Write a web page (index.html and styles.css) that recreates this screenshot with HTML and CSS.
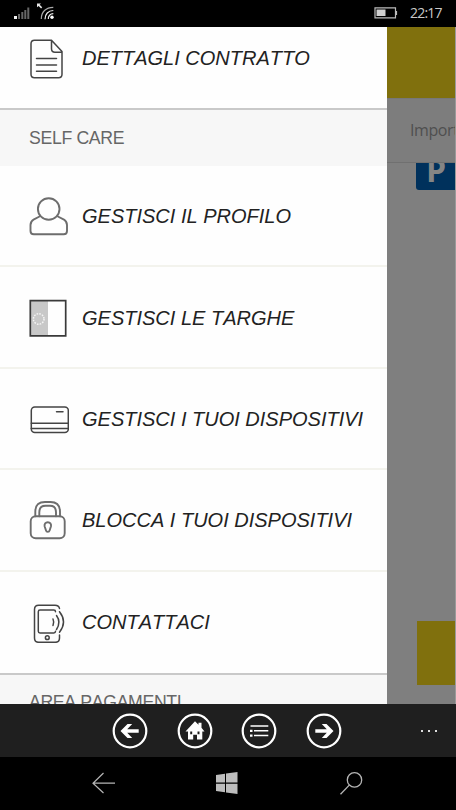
FILE: index.html
```html
<!DOCTYPE html>
<html lang="it">
<head>
<meta charset="utf-8">
<title>Menu</title>
<link rel="stylesheet" href="styles.css">
</head>
<body>
<div class="phone">
  <header class="status">
    <svg class="signal" width="42" height="20" viewBox="0 0 42 20">
      <path fill="#f2f2f2" d="M0 13h3v3H0z"/>
      <path fill="#666" d="M4 11h2v5H4zM7.300 9h2v7h-2zM10.300 7h2v9h-2zM13.300 4.500h2v11.500h-2z"/>
      <path fill="#e8e8e8" d="M23 .5h4l-1.300 1.300 2.500 2.500-1.100 1.100-2.500-2.500L23 4.300z"/>
      <circle cx="38" cy="14.200" r="1.700" fill="#fff"/>
      <g fill="none" stroke-width="1.200"><path stroke="#eee" d="M34.300 16c-.2-3 1.900-5.300 5-5.300M31 16.200c-.1-5 3.300-8.700 8.300-8.700"/><path stroke="#aaa" d="M27.300 16c0-7 4.500-11.700 12-11.700"/></g>
    </svg>
    <div class="status-right">
      <svg width="24" height="12" viewBox="0 0 24 12"><path d="M1 .8h20.500v10H1zM22.500 4v4" fill="none" stroke="#bbb" stroke-width="1.200"/><path fill="#d0d0d0" d="M2.500 2.500h9v6.500h-9z"/></svg>
      <span class="clock">22:17</span>
    </div>
  </header>

  <main class="content">
    <nav class="drawer">
      <a class="item item-first">
        <svg class="icon" viewBox="0 0 40 40"><g class="dark"><path d="M22 1.300H5.500Q2 1.300 2 4.800v30.400q0 3.500 3.500 3.500h24q3.500 0 3.500-3.500V12.500L22.500 1.300v8.500q0 3.500 3.500 3.500h6.500"/><path d="M7.500 19.500h20M7.500 26h20M7.500 32.300h20"/></g></svg>
        <span>DETTAGLI CONTRATTO</span>
      </a>
      <h2 class="section">SELF CARE</h2>
      <a class="item">
        <svg class="icon" viewBox="0 0 40 40"><g class="mid"><circle cx="19.700" cy="12" r="10.800"/><path d="M10.500 19.500 5 22.300Q1.500 24.500 1.500 28v6q0 3.300 3.300 3.300h29.900q3.300 0 3.300-3.300v-6q0-3.500-3.500-5.700L28.900 19.500"/></g></svg>
        <span>GESTISCI IL PROFILO</span>
      </a>
      <a class="item">
        <svg class="icon" viewBox="0 0 40 40"><path fill="#c8c8c8" d="M2 3h17v35H2z"/><path class="plate" d="M1.300 2.700h35.400v35.100H1.300z"/><circle class="stars" cx="9.700" cy="21" r="5.300"/></svg>
        <span>GESTISCI LE TARGHE</span>
      </a>
      <a class="item">
        <svg class="icon" viewBox="0 0 40 40"><g class="dark"><rect x="2.300" y="8" width="37" height="25.500" rx="3.500"/><path d="M2.300 24.300h37M2.300 29.500h37M27.500 12.700H34"/></g></svg>
        <span>GESTISCI I TUOI DISPOSITIVI</span>
      </a>
      <a class="item">
        <svg class="icon" viewBox="0 0 40 40"><g class="mid"><rect x="1.700" y="15.300" width="34" height="22" rx="5"/><path d="M6.300 15.300v-4.500Q6.300 1 16 1h5.500q9.500 0 9.500 9.800v4.500M10.300 15.300v-4Q10.300 4.800 16.500 4.800H21q6 0 6 6.500v4"/><path d="M18.800 21.200c-2.300 0-3.600 1.800-3.200 4l1.500 4.500q.2 1.200 1.700 1.200t1.700-1.200l1.500-4.500c.4-2.200-.9-4-3.200-4z"/></g></svg>
        <span>BLOCCA I TUOI DISPOSITIVI</span>
      </a>
      <a class="item item-last">
        <svg class="icon" viewBox="0 0 40 40"><g class="dark"><path d="M30.500 5.500Q30 2.300 26 2.300H9.700q-4.200 0-4.200 4.200V35q0 4.300 4.200 4.300h16.600q4.200 0 4.200-4.300v-3"/><path d="M26.500 8.700q0-1.700-1.700-1.700H11Q9.300 7 9.300 8.700v19.600Q9.300 30 11 30h13.800q1.700 0 1.700-1.700"/><circle cx="18.300" cy="34.700" r="1.900"/><path d="M24 16q1.400 3 0 6.500M27.500 12.500q4.800 6.500 0 14M30.500 8.700q8 10 0 20.500"/></g></svg>
        <span>CONTATTACI</span>
      </a>
      <h2 class="section section-cut">AREA PAGAMENTI</h2>
    </nav>
    <aside class="behind">
      <div class="banner"></div>
      <div class="amount">Importo</div>
      <div class="parking">P</div>
      <div class="action"></div>
    </aside>
  </main>

  <footer class="appbar">
    <svg viewBox="0 0 36 36"><circle class="ring" cx="18" cy="18" r="16.300"/><path class="arrow" d="M8.500 18l7-7h4.700l-5 5.300h11.500v3.400H15.200l5 5.300h-4.700z"/></svg>
    <svg viewBox="0 0 36 36"><circle class="ring" cx="18" cy="18" r="16.300"/><path fill="#fff" fill-rule="evenodd" d="M18 8.200l3.500 3.500v-2h3v5l3 3.800h-2.200v8H20v-4.700h-3.800v4.700H11v-8H8.500zM13.200 18.500v2.700h2v-2.700zM20.500 18.500v2.700h2v-2.700z"/></svg>
    <svg viewBox="0 0 36 36"><circle class="ring" cx="18" cy="18" r="16.300"/><path d="M9.500 13h17.800M13 17.800h14.300M13 22.500h14.300" stroke="#fff" stroke-width="1.500"/><path fill="#fff" d="M9 16.800h2.500v2.200H9zM9 21.500h2.500v2.200H9z"/></svg>
    <svg viewBox="0 0 36 36"><circle class="ring" cx="18" cy="18" r="16.300"/><path class="arrow" d="M27.500 18l-7-7h-4.700l5 5.300H9.300v3.400h11.500l-5 5.300h4.700z"/></svg>
    <span class="more"><i></i><i></i><i></i></span>
  </footer>
  <footer class="keys">
    <svg width="24" height="24" viewBox="0 0 24 24"><path d="M12.500 1 2 11.200 12.500 21M2 11.200h22" fill="none" stroke="#b5b5b5" stroke-width="1.200"/></svg>
    <svg width="24" height="24" viewBox="0 0 24 24"><path fill="#bdbdbd" d="M1 3l9-1.300v8.800H1zM11 1.500 22.500 0v10.500H11zM1 11.800h9v8.400L1 19zM11 11.800h11.500V22L11 20.400z"/></svg>
    <svg width="24" height="24" viewBox="0 0 24 24"><g fill="none" stroke="#b5b5b5" stroke-width="1.300"><circle cx="15.500" cy="7.900" r="7.200"/><path d="M10.500 12.900 1.500 22.300"/></g></svg>
  </footer>
</div>
</body>
</html>
```

FILE: styles.css
```css
* { box-sizing: border-box; }
body { margin: 0; background: #000; font-family: "Liberation Sans", Arial, sans-serif; }
.phone { width: 456px; height: 810px; display: flex; flex-direction: column; overflow: hidden; }

.status { height: 27px; flex: none; display: flex; justify-content: space-between; align-items: flex-start; padding: 3px 14px 0; background: #000; }
.status-right { display: flex; align-items: center; gap: 12px; height: 20px; }
.clock { color: #c8c8c8; font: 14px/20px "Open Sans", "Noto Sans", sans-serif; letter-spacing: -0.8px; width: 32px; white-space: nowrap; }

.content { height: 677px; flex: none; display: flex; overflow: hidden; }
.drawer { width: 387px; flex: none; background: #fefefe; font-kerning: none; }
.item { height: 101.400px; display: flex; align-items: center; gap: 13px; padding: 2px 0 0 29px; border-bottom: 2px solid #f3f3ed; color: #222; font-size: 20px; font-style: italic; white-space: nowrap; }
.item-first { height: 101px; margin-top: -20px; border-bottom: 0; }
.item-last { border-bottom: 0; height: 101px; padding-top: 1px; }
.icon { width: 40px; height: 40px; flex: none; }
.dark, .mid { fill: none; stroke: #444; stroke-width: 1.500; stroke-linecap: round; stroke-linejoin: round; }
.mid { stroke: #6d6d6d; stroke-width: 1.900; }
.plate { fill: none; stroke: #3a3a3a; stroke-width: 1.700; }
.stars { fill: none; stroke: #f4f4f4; stroke-width: 1.500; stroke-dasharray: 1.600 1.170; }
.section { margin: 0; height: 58px; padding-left: 29px; border-top: 2px solid #c9c9c9; background: #f7f7f7; color: #666; font-size: 17.700px; font-weight: 400; letter-spacing: -0.350px; line-height: 56px; white-space: nowrap; }
.section-cut { line-height: 55px; }

.behind { flex: 1; overflow: hidden; display: flex; flex-direction: column; background: #7f7f7f; border-right: 1px solid #9a9a9a; }
.banner { height: 71px; flex: none; background: #80700d; }
.amount { height: 65px; flex: none; padding-left: 23px; border-top: 1px solid #777; border-bottom: 1px solid #707070; background: #7d7d7d; color: #4f4f4f; font: 16px/63px "Open Sans", "Noto Sans", sans-serif; letter-spacing: -0.400px; white-space: nowrap; }
.parking { height: 27px; width: 60px; flex: none; margin-left: 29px; padding-left: 10px; overflow: hidden; border-radius: 0 0 0 3px; background: #00315c; color: #858585; font: 700 32px/14px "Open Sans", "Noto Sans", sans-serif; }
.action { height: 64px; width: 60px; flex: none; margin: 431px 0 0 30px; background: #80700d; }

.appbar { height: 53px; flex: none; display: flex; align-items: center; gap: 28.500px; padding-left: 112px; background: #1f1f1f; }
.appbar svg { width: 36px; height: 36px; flex: none; }
.ring { fill: none; stroke: #fff; stroke-width: 2.200; }
.arrow { fill: #fff; }
.more { display: flex; gap: 5px; margin-left: 51px; }
.more i { width: 2px; height: 2px; background: #ddd; }
.keys { height: 53px; flex: none; display: flex; align-items: center; gap: 100px; padding-left: 91px; background: #000; }
```
